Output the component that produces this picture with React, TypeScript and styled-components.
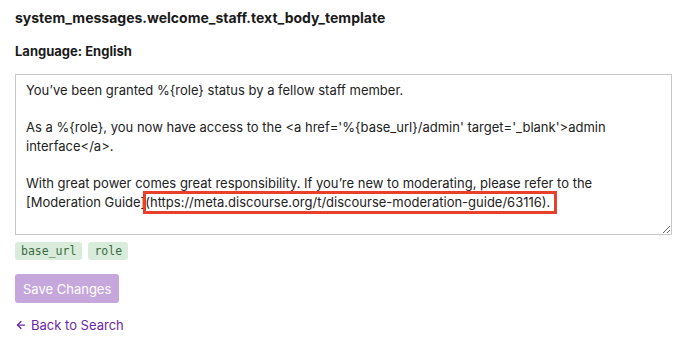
import styled, { createGlobalStyle } from "styled-components";
import { ArrowLeft } from "lucide-react";

const GlobalStyle = createGlobalStyle`
  body {
    margin: 0;
    background: #fff;
    font-family: Inter, "Liberation Sans", sans-serif;
    color: #222;
  }
`;

const Page = styled.div`
  display: flex;
  flex-direction: column;
  padding: 9px 15px 0 15px;
  width: 690px;
  box-sizing: border-box;
`;

const Title = styled.h2`
  margin: 0;
  font-size: 14px;
  line-height: 18px;
  font-weight: 700;
  color: #1a1a1a;
`;

const Language = styled.div`
  margin-top: 16px;
  font-size: 13px;
  line-height: 16px;
  font-weight: 700;
  color: #1a1a1a;
`;

const EditorWrap = styled.div`
  position: relative;
  margin-top: 15px;
  width: 657px;
`;

const Editor = styled.textarea`
  display: block;
  width: 100%;
  height: 161px;
  box-sizing: border-box;
  padding: 6px 10px;
  border: 1px solid #c8c8c8;
  border-radius: 0;
  font-family: Inter, "Liberation Sans", sans-serif;
  font-size: 13px;
  line-height: 18.6px;
  color: #222;
  resize: vertical;
  outline: none;
`;

const Highlight = styled.div`
  position: absolute;
  left: 128px;
  top: 117px;
  width: 414px;
  height: 23px;
  box-sizing: border-box;
  border: 3px solid #e8402a;
  pointer-events: none;
`;

const Chips = styled.div`
  display: flex;
  gap: 6px;
  margin-top: 7px;
`;

const Chip = styled.span`
  display: inline-flex;
  align-items: center;
  height: 18px;
  padding: 0 6px;
  border-radius: 3px;
  background: #d9ecdb;
  color: #3a6b43;
  font-family: "DejaVu Sans Mono", "Liberation Mono", monospace;
  font-size: 11.5px;
`;

const SaveButton = styled.button`
  align-self: flex-start;
  margin-top: 14px;
  height: 29px;
  padding: 0 8px;
  border: none;
  border-radius: 3px;
  background: #c5a7dc;
  color: #fff;
  font-family: Inter, "Liberation Sans", sans-serif;
  font-size: 13px;
  cursor: not-allowed;
`;

const BackLink = styled.a`
  display: inline-flex;
  align-items: center;
  gap: 4px;
  align-self: flex-start;
  margin-top: 14px;
  color: #6b26a8;
  font-size: 13px;
  line-height: 16px;
  text-decoration: none;
  cursor: pointer;
`;

const body = `You’ve been granted %{role} status by a fellow staff member.

As a %{role}, you now have access to the <a href='%{base_url}/admin' target='_blank'>admin interface</a>.

With great power comes great responsibility. If you’re new to moderating, please refer to the [Moderation Guide](https://meta.discourse.org/t/discourse-moderation-guide/63116).`;

export default function App() {
  return (
    <>
      <GlobalStyle />
      <Page>
        <Title>system_messages.welcome_staff.text_body_template</Title>
        <Language>Language: English</Language>
        <EditorWrap>
          <Editor defaultValue={body} spellCheck={false} />
          <Highlight />
        </EditorWrap>
        <Chips>
          <Chip>base_url</Chip>
          <Chip>role</Chip>
        </Chips>
        <SaveButton disabled>Save Changes</SaveButton>
        <BackLink>
          <ArrowLeft size={12} strokeWidth={2.5} />
          Back to Search
        </BackLink>
      </Page>
    </>
  );
}
